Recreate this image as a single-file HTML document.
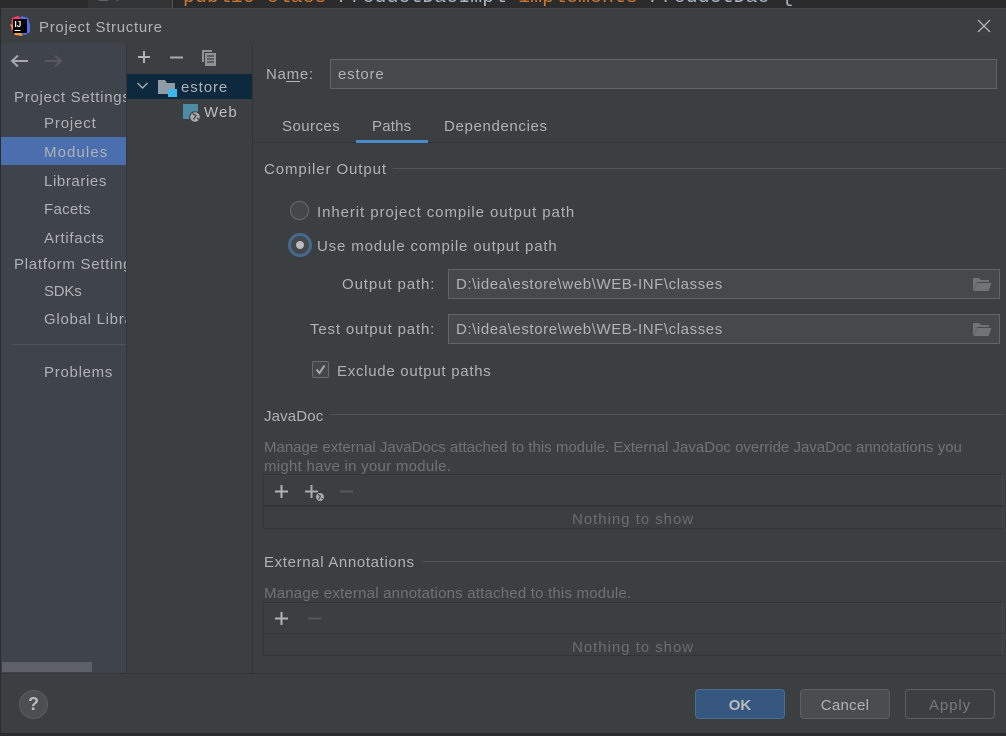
<!DOCTYPE html>
<html><head><meta charset="utf-8"><title>Project Structure</title>
<style>
html,body{margin:0;padding:0;background:#3c3f41}
#r{position:relative;width:1006px;height:736px;overflow:hidden;background:#3c3f41;font-family:"Liberation Sans",sans-serif;font-size:15px;color:#b0b3b5;letter-spacing:.72px}
#r div,#r svg{position:absolute}
.t{white-space:nowrap;line-height:18px;margin-top:1px}
.box{background:#45494a;border:1px solid #646464;box-sizing:border-box}
.h{background:#515355}
.btn{box-sizing:border-box;border-radius:4px;height:30px;top:689px;width:90px;text-align:center;line-height:31px}
</style></head><body>
<div id="r">
<!-- background editor strip -->
<div style="left:0;top:0;width:1006px;height:8px;background:#2b2b2b;overflow:hidden">
<div style="left:88px;top:0;width:84px;height:8px;background:#313335"></div>
<div style="left:172px;top:0;width:1px;height:8px;background:#555"></div>
<div style="left:97px;top:-12px;white-space:nowrap;line-height:18px;color:#606366;font-family:'Liberation Mono',monospace;font-size:20px;letter-spacing:0">14</div>
<div style="left:183px;top:-12px;white-space:nowrap;line-height:18px;color:#cc7832;font-family:'Liberation Mono',monospace;font-size:19.800px;letter-spacing:.1px">public class <span style="color:#a9b7c6">ProductDaoImpl</span> implements <span style="color:#a9b7c6">ProductDao {</span></div>
</div>

<!-- title -->
<div style="left:1px;top:8px;width:1005px;height:1px;background:#454749"></div>
<svg style="left:9px;top:15px" width="22" height="22" viewBox="0 0 22 22"><path d="M3 3 L9 1 L12 3 L2 16Z" fill="#fc3a6d"/><path d="M12 1 L19 3 L21 10 L21 17 L16 20 L12 19Z" fill="#4e70e8"/><path d="M1 9 L6 20 L14 21 L8 12Z" fill="#f89c3b"/><rect x="4" y="4" width="14" height="14" fill="#000"/><text x="5.500" y="12" font-family="Liberation Sans" font-size="8" font-weight="bold" fill="#fff" letter-spacing="0">IJ</text><rect x="5.500" y="15" width="6" height="1" fill="#fff"/></svg>
<div class="t" style="left:39px;top:18px;letter-spacing:.7px">Project Structure</div>
<svg style="left:977px;top:19px" width="14" height="14" viewBox="0 0 14 14"><path d="M1 1L13 13M13 1L1 13" stroke="#b2b4b6" stroke-width="1.300" fill="none"/></svg>

<!-- left sidebar -->
<div style="left:1px;top:43px;width:125px;height:630px;background:#3e434c"></div>
<svg style="left:10px;top:53px" width="20" height="16" viewBox="0 0 20 16"><path d="M2 8H18M8 2.500L2 8L8 13.500" stroke="#a6a8aa" stroke-width="2" fill="none"/></svg>
<svg style="left:43px;top:53px" width="20" height="16" viewBox="0 0 20 16"><path d="M2 8H18M12 2.500L18 8L12 13.500" stroke="#575a5c" stroke-width="2" fill="none"/></svg>
<div style="left:1px;top:137px;width:125px;height:28px;background:#4b6eaf"></div>
<div style="left:0;top:80px;width:126px;height:300px;overflow:hidden">
<div class="t" style="left:14px;top:8px">Project Settings</div>
<div class="t" style="left:44px;top:34px;letter-spacing:.85px">Project</div>
<div class="t" style="left:44px;top:63px;letter-spacing:1.100px">Modules</div>
<div class="t" style="left:44px;top:92px;letter-spacing:.6px">Libraries</div>
<div class="t" style="left:44px;top:120px;letter-spacing:.3px">Facets</div>
<div class="t" style="left:44px;top:149px">Artifacts</div>
<div class="t" style="left:14px;top:175px">Platform Settings</div>
<div class="t" style="left:44px;top:202px;letter-spacing:-.2px">SDKs</div>
<div class="t" style="left:44px;top:230px">Global Libraries</div>
<div class="t" style="left:44px;top:283px">Problems</div>
</div>
<div style="left:12px;top:344px;width:114px;height:1px;background:#515458"></div>
<div style="left:2px;top:662px;width:90px;height:10px;background:#5d6066"></div>

<!-- middle tree -->
<div style="left:126px;top:43px;width:1px;height:630px;background:#323436"></div>
<svg style="left:137px;top:50px" width="14" height="14" viewBox="0 0 14 14"><path d="M7 1V13M1 7H13" stroke="#b0b2b4" stroke-width="2" fill="none"/></svg>
<svg style="left:169px;top:50px" width="14" height="14" viewBox="0 0 14 14"><path d="M1 7.500H14" stroke="#a8aaac" stroke-width="2" fill="none"/></svg>
<svg style="left:200px;top:49px" width="18" height="18" viewBox="0 0 18 18"><path d="M2 1H12V3H4V13H2Z" fill="#909294"/><path d="M5 4H16V17H5Z" fill="#909294"/><path d="M7 7H14M7 10H14M7 13H14" stroke="#3c3f41" stroke-width="1.200"/></svg>
<div style="left:127px;top:74px;width:125px;height:25px;background:#0d293e"></div>
<svg style="left:136px;top:81px" width="13" height="10" viewBox="0 0 13 10"><path d="M1.500 2L6.500 7L11.500 2" stroke="#a6a8aa" stroke-width="1.500" fill="none"/></svg>
<svg style="left:157px;top:78px" width="21" height="20" viewBox="0 0 21 20"><path d="M1 2H8L10 5H18V16H1Z" fill="#8f9ba5"/><rect x="11" y="11" width="9" height="8" fill="#3fb6e8"/></svg>
<div class="t" style="left:181px;top:78px;letter-spacing:.9px">estore</div>
<svg style="left:182px;top:103px" width="20" height="20" viewBox="0 0 20 20"><rect x="1" y="1" width="15" height="15" fill="#4e8ba5"/><circle cx="13" cy="14" r="5.800" fill="#3c3f41"/><circle cx="13" cy="14" r="4.800" fill="#a9abad"/><path d="M10.500 10.500L14 12.500L11.500 16.500M15 15L17 16.500" stroke="#3c3f41" stroke-width="1.200" fill="none"/></svg>
<div class="t" style="left:204px;top:103px;letter-spacing:1.100px;color:#bcbfc1">Web</div>
<div style="left:252px;top:43px;width:1px;height:630px;background:#323436"></div>

<!-- right: name -->
<div class="t" style="left:266px;top:65px">Name:</div>
<div style="left:286px;top:81px;width:14px;height:1px;background:#b4b7b9"></div>
<div class="box" style="left:330px;top:59px;width:667px;height:30px"></div>
<div class="t" style="left:338px;top:65px;letter-spacing:.8px">estore</div>

<!-- tabs -->
<div class="t" style="left:282px;top:117px;letter-spacing:.45px">Sources</div>
<div class="t" style="left:372px;top:117px;letter-spacing:.2px">Paths</div>
<div class="t" style="left:444px;top:117px;letter-spacing:.65px">Dependencies</div>
<div style="left:253px;top:142px;width:753px;height:1px;background:#323436"></div>
<div style="left:356px;top:140px;width:72px;height:3px;background:#4a88c7"></div>

<!-- compiler -->
<div class="t" style="left:264px;top:160px;letter-spacing:.92px">Compiler Output</div>
<div class="h" style="left:393px;top:168px;width:610px;height:1px"></div>
<div style="left:290px;top:201px;width:19px;height:19px;box-sizing:border-box;border-radius:50%;border:1px solid #6b6b6b;background:#43474a"></div>
<div class="t" style="left:317px;top:203px;letter-spacing:.92px">Inherit project compile output path</div>
<div style="left:288px;top:233px;width:24px;height:24px;box-sizing:border-box;border-radius:50%;border:3px solid #46698f;background:#43474a"></div>
<div style="left:296px;top:241px;width:8px;height:8px;border-radius:50%;background:#bbbbbb"></div>
<div class="t" style="left:317px;top:237px;letter-spacing:.85px">Use module compile output path</div>

<div class="t" style="left:342px;top:275px;letter-spacing:.9px">Output path:</div>
<div class="box" style="left:448px;top:269px;width:552px;height:30px"></div>
<div class="t" style="left:456px;top:275px;letter-spacing:.59px">D:\idea\estore\web\WEB-INF\classes</div>
<svg style="left:972px;top:276px" width="20" height="16" viewBox="0 0 20 16"><path d="M1 14V2H7L9 4H17V6H5L2 14Z" fill="#717476"/><path d="M5 7H19.500L16.500 15H2Z" fill="#717476"/></svg>

<div class="t" style="left:310px;top:320px;letter-spacing:.84px">Test output path:</div>
<div class="box" style="left:448px;top:314px;width:552px;height:30px"></div>
<div class="t" style="left:456px;top:320px;letter-spacing:.59px">D:\idea\estore\web\WEB-INF\classes</div>
<svg style="left:972px;top:321px" width="20" height="16" viewBox="0 0 20 16"><path d="M1 14V2H7L9 4H17V6H5L2 14Z" fill="#717476"/><path d="M5 7H19.500L16.500 15H2Z" fill="#717476"/></svg>

<div style="left:312px;top:361px;width:17px;height:17px;box-sizing:border-box;border-radius:2px;border:1px solid #6b6b6b;background:#43474a"></div>
<svg style="left:312px;top:361px" width="17" height="17" viewBox="0 0 17 17"><path d="M4.500 8.500L7.500 12L12.500 4.500" stroke="#a9abad" stroke-width="2" fill="none"/></svg>
<div class="t" style="left:337px;top:362px">Exclude output paths</div>

<!-- javadoc -->
<div class="t" style="left:264px;top:407px;letter-spacing:.15px">JavaDoc</div>
<div class="h" style="left:331px;top:414px;width:672px;height:1px"></div>
<div class="t" style="left:264px;top:438px;letter-spacing:0;color:#707375">Manage external JavaDocs attached to this module. External JavaDoc override JavaDoc annotations you</div>
<div class="t" style="left:264px;top:457px;letter-spacing:.27px;color:#707375">might have in your module.</div>
<div style="left:263px;top:474px;width:740px;height:55px;box-sizing:border-box;border:1px solid #323436;border-right:1px solid #44474a"></div>
<div style="left:264px;top:505px;width:739px;height:2px;background:#323436"></div>
<svg style="left:275px;top:485px" width="13" height="13" viewBox="0 0 13 13"><path d="M6.500 0V13M0 6.500H13" stroke="#b0b2b4" stroke-width="2"/></svg>
<svg style="left:305px;top:484px" width="20" height="18" viewBox="0 0 20 18"><path d="M6.500 1V14M0 7.500H13" stroke="#a8aaac" stroke-width="2"/><circle cx="15" cy="13" r="4" fill="#a9abad"/><path d="M13 10.500L15.500 12L13.500 15.500M16.500 14L18 15" stroke="#3c3f41" fill="none"/></svg>
<svg style="left:340px;top:485px" width="13" height="13" viewBox="0 0 13 13"><path d="M0 6.500H13" stroke="#56595b" stroke-width="2"/></svg>
<div class="t" style="left:572px;top:510px;letter-spacing:.97px;color:#6b6e70">Nothing to show</div>

<!-- annotations -->
<div class="t" style="left:264px;top:553px;letter-spacing:.65px">External Annotations</div>
<div class="h" style="left:422px;top:561px;width:581px;height:1px"></div>
<div class="t" style="left:264px;top:584px;letter-spacing:.2px;color:#707375">Manage external annotations attached to this module.</div>
<div style="left:263px;top:602px;width:740px;height:54px;box-sizing:border-box;border:1px solid #323436;border-right:1px solid #44474a"></div>
<div style="left:264px;top:633px;width:739px;height:1px;background:#323436"></div>
<svg style="left:275px;top:612px" width="13" height="13" viewBox="0 0 13 13"><path d="M6.500 0V13M0 6.500H13" stroke="#b0b2b4" stroke-width="2"/></svg>
<svg style="left:308px;top:612px" width="13" height="13" viewBox="0 0 13 13"><path d="M0 6.500H13" stroke="#56595b" stroke-width="2"/></svg>
<div class="t" style="left:572px;top:638px;letter-spacing:.97px;color:#6b6e70">Nothing to show</div>

<!-- footer -->
<div style="left:0;top:673px;width:1006px;height:1px;background:#323436"></div>
<div style="left:19px;top:690px;width:29px;height:29px;box-sizing:border-box;border-radius:50%;border:1px solid #5a5d5f;background:#4c4f51;color:#bbbbbb;font-weight:bold;font-size:18px;line-height:27px;text-align:center;letter-spacing:0">?</div>
<div class="btn" style="left:695px;background:#365880;border:1px solid #4c708c;color:#bbbbbb;font-weight:bold;letter-spacing:0">OK</div>
<div class="btn" style="left:800px;background:#4a4d4f;border:1px solid #5e6060;letter-spacing:.3px">Cancel</div>
<div class="btn" style="left:905px;background:#3c3f41;border:1px solid #5e6060;color:#777a7c;letter-spacing:.9px">Apply</div>
<div style="left:0;top:733px;width:1006px;height:3px;background:#2b2b2b"></div>
<div style="left:0;top:8px;width:1px;height:728px;background:#2b2b2b"></div>
</div>
</body></html>
